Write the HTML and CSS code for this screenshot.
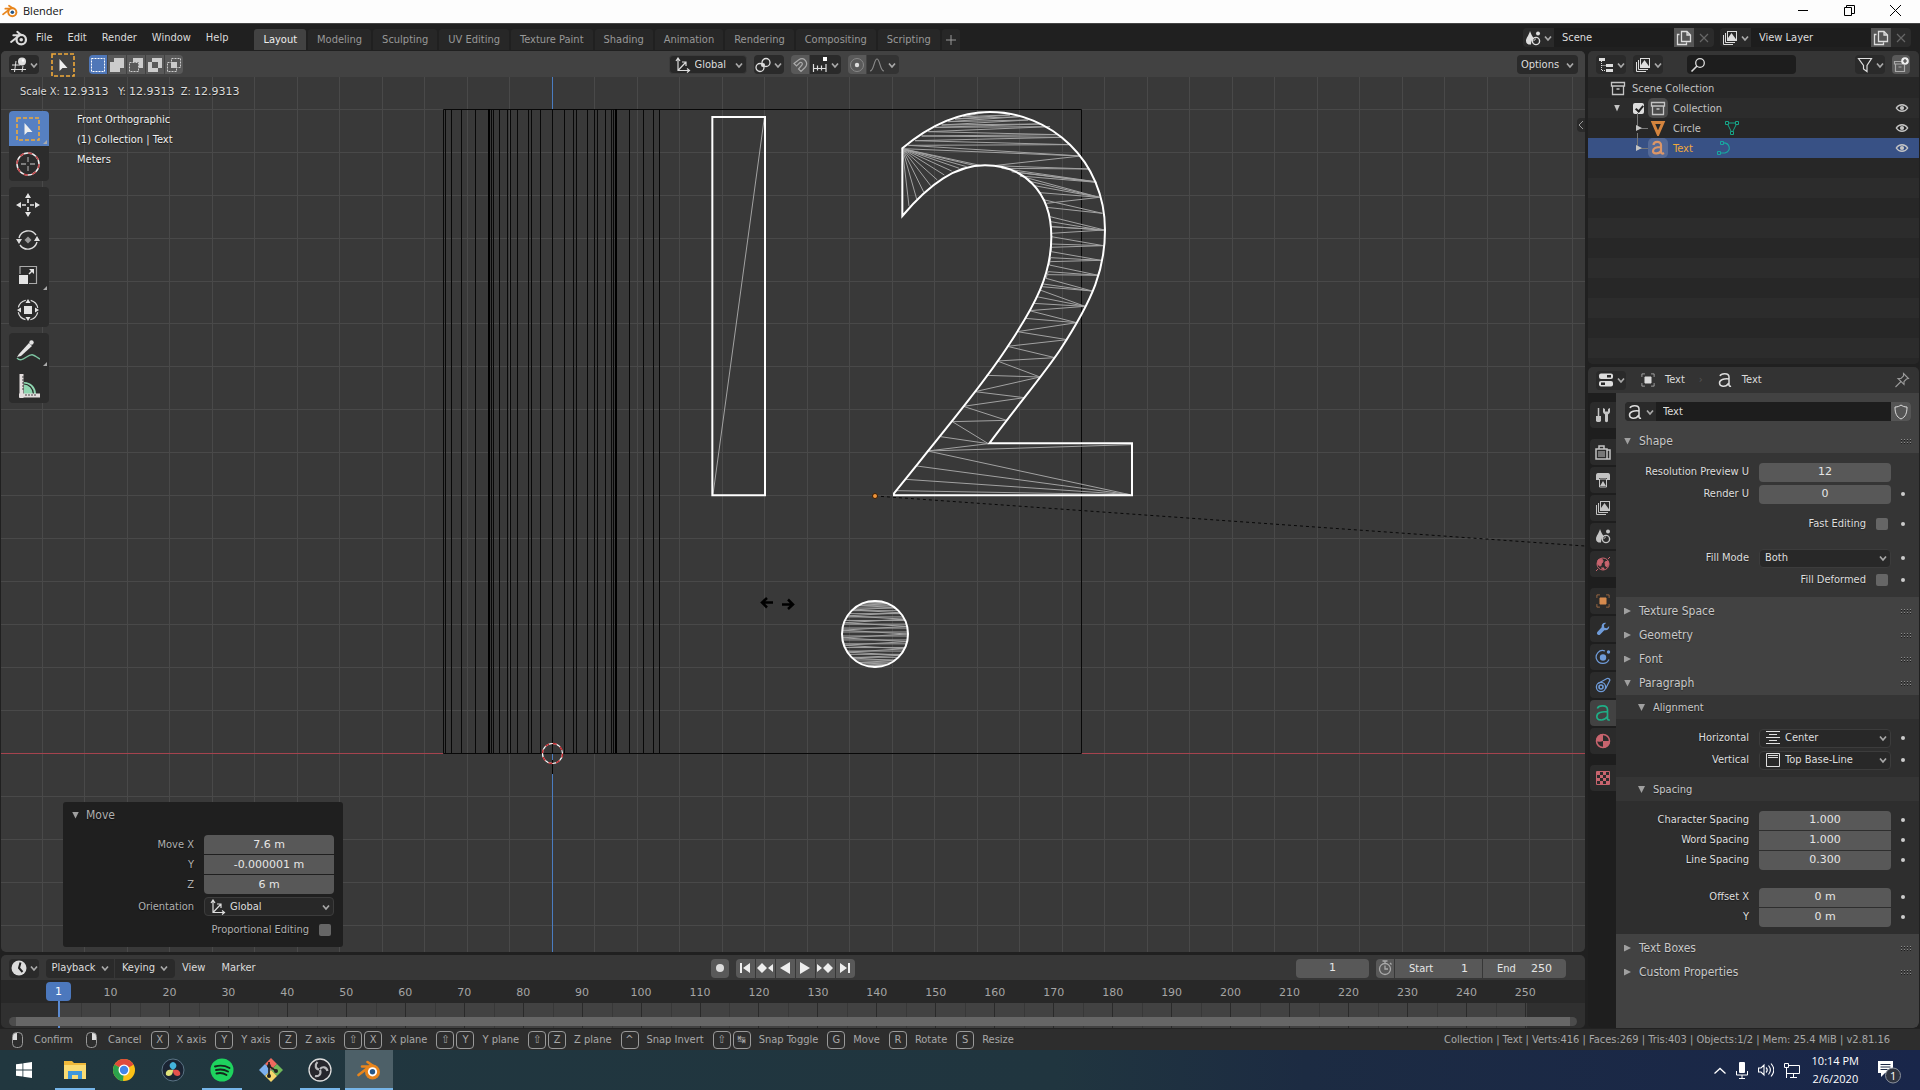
FILE: index.html
```html
<!DOCTYPE html>
<html lang="en">
<head>
<meta charset="utf-8">
<title>Blender</title>
<link rel="stylesheet" href="styles.css">
</head>
<body>
<svg class="defs" aria-hidden="true">
  <symbol id="chev" viewBox="0 0 8 8"><path d="M1 2.500 4 6l3-3.500" fill="none" stroke="currentColor" stroke-width="1.700"/></symbol>
  <symbol id="logo" viewBox="0 0 16 16"><path d="M1 11.500 8.500 5.500H3M6.500 2.500l3.500 3" fill="none" stroke="currentColor" stroke-width="1.800" stroke-linecap="round"/><circle cx="10" cy="9.500" r="4.200" fill="none" stroke="currentColor" stroke-width="2"/><circle cx="10" cy="9.500" r="1.600" fill="currentColor"/></symbol>
  <symbol id="logo-color" viewBox="0 0 24 24"><path d="M1.500 17 12.500 8.500H5M10.500 4l8 5.500" fill="none" stroke="#e8851c" stroke-width="2.600" stroke-linecap="round"/><circle cx="15.500" cy="14" r="7.500" fill="#e8851c"/><circle cx="15.500" cy="13.800" r="4.600" fill="#fff"/><circle cx="15.500" cy="13.800" r="2.700" fill="#265787"/></symbol>
  <symbol id="view3d" viewBox="0 0 16 16"><path d="M5 4 3.500 15M12 9l-1 6M1 8h8M0 12.500h15" fill="none" stroke="currentColor"/><circle cx="11" cy="4.500" r="4" fill="currentColor"/><circle cx="12" cy="3.500" r="1.200" fill="#fff"/></symbol>
  <symbol id="select" viewBox="0 0 24 24"><rect x="1" y="1" width="22" height="22" fill="none" stroke="#f0a93a" stroke-width="1.600" stroke-dasharray="4 2"/><path d="M8.500 6v12l3-3h5z" fill="#eee"/></symbol>
  <symbol id="axes" viewBox="0 0 16 16"><path d="M3 2v11.500h11M1 4l2-3 2 3M12 11.500l2.500 2-2.500 2M3 13.500 11 5M7 5h4v4" fill="none" stroke="currentColor" stroke-width="1.200"/></symbol>
  <symbol id="pivot" viewBox="0 0 16 16"><circle cx="5" cy="10.500" r="4" fill="none" stroke="currentColor" stroke-width="1.300"/><circle cx="11" cy="5.500" r="4" fill="none" stroke="currentColor" stroke-width="1.300"/><circle cx="8" cy="8" r="2" fill="currentColor"/></symbol>
  <symbol id="magnet" viewBox="0 0 16 16"><path d="M2 6.500 6.500 3c6-4 10.500 3 6.500 7.500l-4 4-2.500-2.500 3.500-4c1-2-.5-3-2-2.500L4.500 9z" fill="none" stroke="currentColor" stroke-width="1.200"/></symbol>
  <symbol id="snapinc" viewBox="0 0 16 16"><path d="M1.500 7v8M14 7v8M5.500 8.500v5M9.500 8.500v5M1 11.500h13" fill="none" stroke="currentColor" stroke-width="1.200"/><path d="M11 0h4v4h-4z" fill="#fff"/></symbol>
  <symbol id="prop" viewBox="0 0 16 16"><circle cx="8" cy="8" r="6.500" fill="none" stroke="#888"/><circle cx="8" cy="8" r="2.200" fill="#ddd"/></symbol>
  <symbol id="curve" viewBox="0 0 16 16"><path d="M1 14c4 0 4-12 7-12s3 12 7 12" fill="none" stroke="currentColor" stroke-width="1.200"/></symbol>
  <symbol id="scene" viewBox="0 0 16 16"><path d="M5 1C4 5 1 8 1 11c0 3 3 4 5 3.500 0-3 1-5 3-6C7 6 6 4 5 1z" fill="currentColor"/><circle cx="11" cy="11" r="3.600" fill="none" stroke="currentColor" stroke-width="1.400"/><circle cx="13" cy="3.500" r="2" fill="currentColor"/><path d="M9 11c0-1 1-2 2-2" fill="none" stroke="currentColor"/></symbol>
  <symbol id="layers" viewBox="0 0 16 16"><path d="M1.500 5v9.500H11M3.500 3v9.500h9.500" fill="none" stroke="currentColor"/><rect x="5.500" y="1.500" width="9" height="9" fill="none" stroke="currentColor"/><path d="M6 10V8l3.500-5 5 7z" fill="currentColor"/></symbol>
  <symbol id="copy" viewBox="0 0 16 16"><path d="M5.500 1.500H11l3.500 3.500v6.500h-9zM11 1.500V5h3.500M3.500 4.500h-2v10h9v-2" fill="none" stroke="currentColor" stroke-width="1.300"/></symbol>
  <symbol id="cross" viewBox="0 0 16 16"><path d="m4 4 8 8M12 4l-8 8" stroke="currentColor" stroke-width="1.200"/></symbol>
  <symbol id="tree" viewBox="0 0 16 16"><path d="M1 1h6v3H1zM8 7h7v3H8zM8 12h7v3H8z" fill="currentColor"/><path d="M3.500 4v9.500H8M3.500 8.500H8" fill="none" stroke="currentColor" stroke-dasharray="1 1"/></symbol>
  <symbol id="search" viewBox="0 0 16 16"><circle cx="10" cy="6" r="4.300" fill="none" stroke="currentColor" stroke-width="1.300"/><path d="m7 9-5.500 5.500" stroke="currentColor" stroke-width="1.600"/></symbol>
  <symbol id="funnel" viewBox="0 0 16 16"><path d="M1.500 1.500h13L10 8.500v6L6.500 12V8.500z" fill="none" stroke="currentColor" stroke-width="1.200"/></symbol>
  <symbol id="box" viewBox="0 0 16 16"><path d="M1.500 2.500h13V6h-13zM2.500 6v8.500h11V6M6.500 9h3" fill="none" stroke="currentColor" stroke-width="1.300"/></symbol>
  <symbol id="boxnew" viewBox="0 0 16 16"><path d="M1.500 4.500h8V7h-8zM2.500 7v7.500h9V8M5.500 10h3" fill="none" stroke="currentColor" stroke-width="1.200"/><circle cx="12" cy="4" r="3.800" fill="#eee"/><path d="M12 2v4M10 4h4" stroke="#444" stroke-width="1.200"/></symbol>
  <symbol id="eye" viewBox="0 0 16 16"><path d="M1.500 8C4.500 3 11.500 3 14.500 8c-3 5-10 5-13 0z" fill="none" stroke="currentColor" stroke-width="1.600"/><circle cx="8" cy="8" r="2.400" fill="currentColor"/></symbol>
  <symbol id="meshobj" viewBox="0 0 16 16"><path d="M3 2.500h10L8 14z" fill="none" stroke="#d4843e" stroke-width="3"/></symbol>
  <symbol id="meshdata" viewBox="0 0 16 16"><path d="M3 3h10M3 3l5 10 5-10" fill="none" stroke="#17a589"/><path d="M1.500 1.500h3v3h-3zM11.500 1.500h3v3h-3zM6.500 11.500h3v3h-3z" fill="#262626" stroke="#17a589"/></symbol>
  <symbol id="curvedata" viewBox="0 0 16 16"><path d="M6 3c8-1 10 8 3 10H3" fill="none" stroke="#17a9a0" stroke-width="1.200"/><path d="M4.500 1.500h3v3h-3zM1.500 11.500h3v3h-3z" fill="#385185" stroke="#17a9a0"/></symbol>
  <symbol id="afont" viewBox="0 0 16 16"><path d="M3 4c1-3 9-3.500 9 1v8c0 1 1 1.500 2 1M12 7c-5-.5-9.500.5-9.500 4s6 5 9.500 0" fill="none" stroke="currentColor" stroke-width="1.500"/></symbol>
  <symbol id="afont-bold" viewBox="0 0 16 16"><path d="M3.500 5c0-4 7.500-4.500 7.500 0v7c0 1.500 1.500 2 3 1M11 7c-5 0-8 1.500-8 4s5 4 8 0" fill="none" stroke="#dc9667" stroke-width="2.200"/></symbol>
  <symbol id="props" viewBox="0 0 16 16"><rect x="1" y="1.500" width="14" height="5.500" rx="2" fill="currentColor"/><rect x="1" y="9" width="14" height="5.500" rx="2" fill="currentColor"/><path d="M9 3h4v2.500H9zM3 10.500h4V13H3z" fill="#282828"/></symbol>
  <symbol id="object" viewBox="0 0 16 16"><path d="M4.500 4.500h7v7h-7z" fill="currentColor" stroke="currentColor"/><path d="M1 4.500V1h3.500M11.500 1H15v3.500M15 11.500V15h-3.500M4.500 15H1v-3.500" fill="none" stroke="currentColor" opacity=".7"/></symbol>
  <symbol id="pin" viewBox="0 0 16 16"><path d="m9.500 1.500 5 5-2 .5-2.500 2.500v3l-6-6h3L9.500 4zM7 9.500 1.500 15" fill="none" stroke="currentColor" stroke-width="1.100"/></symbol>
  <symbol id="shield" viewBox="0 0 16 16"><path d="M2 3c3 0 4.500-1 6-2 1.500 1 3 2 6 2 0 6-1.500 10-6 12C3.500 13 2 9 2 3z" fill="none" stroke="currentColor"/></symbol>
  <symbol id="tool" viewBox="0 0 16 16"><path d="M3.500 1v8" stroke="currentColor" stroke-width="1.500"/><path d="M1 9h5v4.500c0 2-5 2-5 0z" fill="currentColor"/><path d="M8 1v3.500C8 6.500 9.500 7 10 7.500v6.500c0 1.500 3 1.500 3 0V7.500c.5-.5 2-1 2-3V1l-2 1v2.500h-3V2z" fill="currentColor"/></symbol>
  <symbol id="render" viewBox="0 0 16 16"><path d="M1 5h11v10H1zM12 6h3v9h-3M4 5V2h5v3" fill="none" stroke="currentColor" stroke-width="1.500"/><path d="M3 8h7M3 10h7M3 12h7" stroke="currentColor"/></symbol>
  <symbol id="output" viewBox="0 0 16 16"><path d="M1 4c0-3 1-3 3-3h8c2 0 3 0 3 3v4h-3V6H4v2H1z" fill="currentColor"/><path d="M4.500 7h7v8h-7z" fill="none" stroke="currentColor"/><path d="m5 14 3-5 3 5z" fill="currentColor"/></symbol>
  <symbol id="world" viewBox="0 0 16 16"><circle cx="8" cy="8" r="6" fill="none" stroke="currentColor"/><path d="M3 4c3-2 5-1 5 1S6 7 6 9s-2 1-3.500-1zM10 6l3-1 .5 3-1.500 3-1.500-1zM6.500 12l2.500 0-.5 1.500zM1 15l2-2M13 3l2-2" fill="currentColor" stroke="currentColor"/></symbol>
  <symbol id="wrench" viewBox="0 0 16 16"><path d="M15 4.500 12.500 7 9.500 6.500 9 3.500 11.500 1C8 .5 6 3 6.500 6L1.500 11.500c-1.500 2 1 4.500 3 3L9.500 9.500c3.500.5 6-2 5.500-5z" fill="currentColor"/></symbol>
  <symbol id="physics" viewBox="0 0 16 16"><path d="M10 2C4-.5 0 6 1.500 10c2 5.500 10 6 12.500.5" fill="none" stroke="currentColor" stroke-width="1.200"/><circle cx="8" cy="8.500" r="3.200" fill="currentColor"/><circle cx="13.500" cy="3" r="1.700" fill="currentColor"/></symbol>
  <symbol id="constraint" viewBox="0 0 16 16"><circle cx="6" cy="10" r="4.600" fill="none" stroke="currentColor" stroke-width="1.300"/><circle cx="6" cy="10" r="2" fill="none" stroke="currentColor" stroke-width="1.600"/><path d="M3 6.500 12 1.500c2-.5 3.500 1 2.500 2.500L10.500 12" fill="none" stroke="currentColor" stroke-width="1.200"/></symbol>
  <symbol id="material" viewBox="0 0 16 16"><circle cx="8" cy="8" r="6.500" fill="none" stroke="currentColor" stroke-width="1.500"/><path d="M8 1a7 7 0 0 0-7 7c2 1 5 1 7 0zM8 8h7a7 7 0 0 1-7 7z" fill="currentColor"/></symbol>
  <symbol id="texture" viewBox="0 0 16 16"><path d="M1.500 1.500h13v13h-13z" fill="none" stroke="currentColor"/><path d="M2 2h3v3H2zM8 2h3v3H8zM5 5h3v3H5zM11 5h3v3h-3zM2 8h3v3H2zM8 8h3v3H8zM5 11h3v3H5zM11 11h3v3h-3z" fill="currentColor"/></symbol>
  <symbol id="aligncenter" viewBox="0 0 16 16"><path d="M1 1.500h14M4 4.500h8M1 7.500h14M4 10.500h8M1 13.500h14" stroke="currentColor" stroke-width="1.200"/></symbol>
  <symbol id="aligntop" viewBox="0 0 16 16"><path d="M1.500 1.500h13v13h-13zM3 3.500h10M3 5.500h10" fill="none" stroke="currentColor"/></symbol>
  <symbol id="clock" viewBox="0 0 16 16"><circle cx="8" cy="8" r="7.500" fill="currentColor"/><path d="M9.500 2.500 8 8l3.500 4" fill="none" stroke="#222" stroke-width="2"/></symbol>
  <symbol id="stopwatch" viewBox="0 0 16 16"><circle cx="8" cy="9" r="5.500" fill="none" stroke="currentColor" stroke-width="1.300"/><path d="M8 5.500V9h3M5.500 1h5M8 1v2.500M13 3l1.500 1.500" fill="none" stroke="currentColor" stroke-width="1.300"/></symbol>
  <symbol id="grip" viewBox="0 0 11 5"><path d="M0 .5h11M0 3.500h11" stroke="#8a8a8a" stroke-dasharray="1 2"/><path d="M0 1.500h11M0 4.500h11" stroke="#1c1c1c" stroke-dasharray="1 2"/></symbol>
</svg>

<header class="titlebar">
  <svg class="i16"><use href="#logo-color"/></svg>
  <span>Blender</span>
  <div class="winbtns">
    <button aria-label="Minimize"><svg width="11" height="11"><path d="M0 5.500h10" stroke="#000"/></svg></button>
    <button aria-label="Restore"><svg width="11" height="11"><path d="M.5 2.500h7v8h-7zM2.500 2.500v-2h8v8h-3" fill="none" stroke="#000"/></svg></button>
    <button aria-label="Close"><svg width="11" height="11"><path d="m0 0 11 11M11 0 0 11" stroke="#000"/></svg></button>
  </div>
</header>

<div class="topbar">
  <nav class="menus">
    <button aria-label="Blender menu"><svg class="i18"><use href="#logo"/></svg></button>
    <button>File</button><button>Edit</button><button>Render</button><button>Window</button><button>Help</button>
  </nav>
  <nav class="tabs">
    <button class="on">Layout</button><button>Modeling</button><button>Sculpting</button><button>UV Editing</button><button>Texture Paint</button><button>Shading</button><button>Animation</button><button>Rendering</button><button>Compositing</button><button>Scripting</button><button aria-label="Add workspace"><svg width="10" height="10"><path d="M5 0v10M0 5h10" stroke="#999"/></svg></button>
  </nav>
  <div class="idblock">
    <button class="drop" aria-label="Browse scene"><svg class="i16"><use href="#scene"/></svg><svg class="chev"><use href="#chev"/></svg></button>
    <input aria-label="Scene name" value="Scene">
    <button class="raised" aria-label="New scene"><svg class="i16"><use href="#copy"/></svg></button>
    <button class="dim" aria-label="Delete scene"><svg class="i16"><use href="#cross"/></svg></button>
  </div>
  <div class="idblock">
    <button class="drop" aria-label="Browse view layer"><svg class="i16"><use href="#layers"/></svg><svg class="chev"><use href="#chev"/></svg></button>
    <input aria-label="View layer name" value="View Layer">
    <button class="raised" aria-label="New view layer"><svg class="i16"><use href="#copy"/></svg></button>
    <button class="dim" aria-label="Delete view layer"><svg class="i16"><use href="#cross"/></svg></button>
  </div>
</div>

<div class="workspace">
  <div class="column">
    <main class="area view">
      <div class="head viewhead">
        <div class="cluster">
          <button class="drop solo" aria-label="Editor type"><svg class="i16"><use href="#view3d"/></svg><svg class="chev"><use href="#chev"/></svg></button>
          <svg class="i24 activetool"><use href="#select"/></svg>
          <div class="joined modes">
            <button class="on" aria-label="Set"><svg class="i16" viewBox="0 0 16 16"><path d="M1.500 1.500h13v13h-13z" fill="none" stroke="#fff" stroke-dasharray="2 1"/></svg></button>
            <button aria-label="Extend"><svg class="i16" viewBox="0 0 16 16"><path d="M5 1h10v10h-4v4H1V5h4z" fill="#ccc"/></svg></button>
            <button aria-label="Subtract"><svg class="i16" viewBox="0 0 16 16"><path d="M5 1h10v10h-4V5H5z" fill="#ccc"/><path d="M1.500 5.500h9v9h-9z" fill="none" stroke="#ccc" stroke-dasharray="2 1"/></svg></button>
            <button aria-label="Difference"><svg class="i16" viewBox="0 0 16 16"><path d="M5 1h10v10h-4v4H1V5h4zm0 4v6h6V5z" fill="#ccc" fill-rule="evenodd"/></svg></button>
            <button aria-label="Intersect"><svg class="i16" viewBox="0 0 16 16"><path d="M5 5h6v6H5z" fill="#ccc"/><path d="M5.500 1.500h9v9h-9zM1.500 5.500h9v9h-9z" fill="none" stroke="#ccc" stroke-dasharray="2 1"/></svg></button>
          </div>
        </div>
        <div class="cluster middle">
          <div class="select global"><svg class="i16"><use href="#axes"/></svg><select aria-label="Transform orientation"><option>Global</option></select><svg class="chev"><use href="#chev"/></svg></div>
          <button class="drop solo" aria-label="Pivot point"><svg class="i16"><use href="#pivot"/></svg><svg class="chev"><use href="#chev"/></svg></button>
          <div class="joined"><button aria-label="Snap"><svg class="i16"><use href="#magnet"/></svg></button><button class="drop" aria-label="Snapping"><svg class="i16"><use href="#snapinc"/></svg><svg class="chev"><use href="#chev"/></svg></button></div>
          <div class="joined"><button aria-label="Proportional editing"><svg class="i16"><use href="#prop"/></svg></button><button class="drop faded" aria-label="Falloff"><svg class="i16"><use href="#curve"/></svg><svg class="chev"><use href="#chev"/></svg></button></div>
        </div>
        <div class="cluster end"><button class="drop options">Options<svg class="chev"><use href="#chev"/></svg></button></div>
      </div>
      <div class="canvas">
        <svg class="scene" aria-label="3D viewport">
          <g transform="translate(-1 -77)">
            <path id="grid" class="grid"/>
            <path d="M0 753.500H443M1081 753.500H3000" stroke="#a5434e"/>
            <path d="M552.500 77V109M552.500 753V2000" stroke="#4a7cc0"/>
            <path id="cylinder" d="M443.500 109.500H1081.500V753.500H443.500z" fill="none" stroke="#080808"/>
            <path d="M489 109V753M616 109V753" stroke="#000" stroke-width="2"/>
            <path d="M875 496 1585 546 2300 596" fill="none" stroke="#080808" stroke-dasharray="3 3"/>
            <g transform="translate(700 100) scale(.33333)" class="mesh">
              <path class="tri" d="M193 53 39 1184M607 146 627 318M607 146 650 297M607 146 671 276M607 146 692 257M607 146 712 240M607 146 733 225M607 146 755 213M607 146 778 205M607 146 800 200M607 146 825 197M607 146 1143 168M607 146 840 196
              M860 36 790 50 930 45 765 57 958 50 745 65 985 60 725 75 1020 72 705 82 1050 80 685 95 1075 104 665 108 1085 112 645 122 1110 134 625 136 1143 168
              M1143 168 880 197 1168 207 905 205 1185 245 935 215 1190 247 960 228 1198 292 985 243 1003 257 1198 292 1020 278 1030 299 1207 340 1040 322 1050 350 1213 390 1053 380 1054 410 1210 437 1054 432 1054 455 1203 481 1052 473 1048 495 1195 526 1045 515 1038 535 1176 573 1030 552 1020 570 1155 619 1010 590 1000 610 1155 619 988 632 1130 668 975 655 M1130 668 952 695 1102 719 922 739 1065 773 892 783 1020 831 858 826M1020 831 825 875 973 893 790 919 920 961 757 965 865 1031 722 1010M865 1031 683 1053 1294 1034M683 1053 1290 1184M650 1098 1290 1184M617 1138 1290 1184M590 1172 1290 1184
              M1052 365 1213 392M1040 310 1198 292M1052 442 1210 437M1048 485 1203 481M1044 524 1195 526M1025 560 1176 573M1052 380 1213 390M1054 400 1213 390"/>
              <path class="outline" d="M37 51H195V1186H37zM607 145C690 75 780 36 870 36 1050 36 1215 180 1215 390 1215 505 1182 594 1080 750 1035 818 960 907 868 1030H1296V1186H582V1180C720 1008 855 846 930 729 1005 615 1054 525 1054 410 1054 270 967 196 855 196 768 196 690 250 607 348z"/>
            </g>
            <path id="disc" class="tri"/>
            <circle cx="875" cy="634" r="33" fill="none" stroke="#fff" stroke-width="2"/>
            <circle cx="875" cy="496" r="2.500" fill="#f0963c" stroke="#3a1c00"/>
            <path d="M552.500 737v9M552.500 760v14M532 753.500h10M563 753.500h10" stroke="#050505"/>
            <circle cx="552.500" cy="753.500" r="10" fill="none" stroke="#fff" stroke-width="1.200"/>
            <circle cx="552.500" cy="753.500" r="10" fill="none" stroke="#c4272c" stroke-width="1.400" stroke-dasharray="4 3.850"/>
            <path d="M773 602.500H763M767 598l-5 4.500 5 5M782 604.500h10M788 599.500l5 5-5 4.500" fill="none" stroke="#000" stroke-width="2.500"/>
          </g>
        </svg>
        <p class="status">Scale X: <b>12.9313</b>&nbsp;&nbsp; Y: <b>12.9313</b>&nbsp; Z: <b>12.9313</b></p>
        <div class="overlay">
          <div class="toolbar">
            <div class="tools">
              <button class="on more" aria-label="Select box"><svg class="i24"><use href="#select"/></svg></button>
              <button aria-label="Cursor"><svg class="i24" viewBox="0 0 24 24"><circle cx="12" cy="12" r="11" fill="none" stroke="#eee" stroke-width="1.500"/><circle cx="12" cy="12" r="11" fill="none" stroke="#c0484c" stroke-width="1.600" stroke-dasharray="4.300 4.300"/><path d="M12 5v5M12 14v5M5 12h5M14 12h5" stroke="#999" stroke-width="1.300"/></svg></button>
            </div>
            <div class="tools">
              <button aria-label="Move"><svg class="i24" viewBox="0 0 24 24"><path d="M12 6v4M12 14v4M6 12h4M14 12h4" stroke="#e4e4e4" stroke-width="1.700"/><path d="m12 0 3 5H9zM12 24l3-5H9zM0 12l5-3v6zM24 12l-5-3v6z" fill="#e4e4e4"/></svg></button>
              <button aria-label="Rotate"><svg class="i24" viewBox="0 0 24 24"><path d="M3 10a9.500 9.500 0 0 1 17-3M21 14a9.500 9.500 0 0 1-17 3" fill="none" stroke="#ddd" stroke-width="1.400"/><path d="M0 11h6l-3 5zM18 13h6l-3-5z" fill="#ddd"/><path d="m12 8.500 3.500 3.500-3.500 3.500L8.500 12z" fill="#999"/></svg></button>
              <button class="more" aria-label="Scale"><svg class="i24" viewBox="0 0 24 24"><path d="M4 11V3.500h16.500v17H13" fill="none" stroke="#aaa" stroke-width="1.200"/><path d="M3 12h9v9H3zM18 6v5l-5-5z" fill="#e4e4e4"/><path d="m13 11 3-3" stroke="#e4e4e4" stroke-width="1.500"/></svg></button>
              <button aria-label="Transform"><svg class="i24" viewBox="0 0 24 24"><circle cx="12" cy="12" r="10" fill="none" stroke="#ddd" stroke-width="1.200" stroke-dasharray="10.700 5" stroke-dashoffset="-2.500"/><path d="M8 8h8v8H8zM12 1l2.500 4h-5zM12 23l2.500-4h-5zM1 12l4-2.500v5zM23 12l-4-2.500v5z" fill="#e4e4e4"/></svg></button>
            </div>
            <div class="tools">
              <button class="more" aria-label="Annotate"><svg class="i24" viewBox="0 0 24 24"><path d="M1 19c5 6 11-5 16-3 3 1 3 2 7 4" fill="none" stroke="#7cc3a0" stroke-width="1.400"/><path d="m3 15 10-11 3 3L5 17l-4 1z" fill="#e4e4e4"/><circle cx="15.500" cy="3.500" r="2.200" fill="#e4e4e4"/></svg></button>
              <button aria-label="Measure"><svg class="i24" viewBox="0 0 24 24"><path d="M8 20V8c7 0 12 5 12 12z" fill="#8fd6b0"/><path d="M8 10c5 0 9 4 9.500 10" fill="none" stroke="#2c2c2c" stroke-width="1.200"/><path d="M5.500 0v24M3 21.500h21" stroke="#e4dede" stroke-width="4"/><path d="M6 3h2M6 6h2M6 9h2M6 12h2M6 15h2M10 20v2M13 20v2M16 20v2M19 20v2" stroke="#444"/></svg></button>
            </div>
          </div>
          <p class="info">Front Orthographic<br>(1) Collection | Text<br>Meters</p>
        </div>
        <button class="flap right" aria-label="Show sidebar"><svg width="6" height="10"><path d="M5 1 1 5l4 4" fill="none" stroke="#999"/></svg></button>
        <section class="redo">
          <h2><span class="tri-open"></span>Move</h2>
          <div class="grp">
            <label for="mx">Move X</label><input id="mx" value="7.6 m">
            <label for="my">Y</label><input id="my" value="-0.000001 m">
            <label for="mz">Z</label><input id="mz" value="6 m">
          </div>
          <div class="grp">
            <label for="mo">Orientation</label><div class="select"><svg class="i16"><use href="#axes"/></svg><select id="mo"><option>Global</option></select><svg class="chev"><use href="#chev"/></svg></div>
          </div>
          <div class="check"><label for="mp">Proportional Editing</label><input type="checkbox" id="mp"></div>
        </section>
      </div>
    </main>

    <section class="area timeline">
      <div class="head tlhead">
        <div class="cluster">
          <button class="drop solo" aria-label="Editor type"><svg class="i16"><use href="#clock"/></svg><svg class="chev"><use href="#chev"/></svg></button>
          <div class="joined tlmenus"><button class="drop">Playback<svg class="chev"><use href="#chev"/></svg></button><button class="drop">Keying<svg class="chev"><use href="#chev"/></svg></button></div>
          <button class="plain">View</button><button class="plain">Marker</button>
        </div>
        <div class="cluster play">
          <div class="joined"><button aria-label="Auto keying"><svg class="i16" viewBox="0 0 16 16"><circle cx="8" cy="8" r="4" fill="#ddd"/></svg></button></div>
          <div class="joined transport">
            <button aria-label="First frame"><svg class="i16" viewBox="0 0 16 16"><path d="M3 3h2v10H3zM13 3v10L6 8z" fill="#eee"/></svg></button>
            <button aria-label="Previous keyframe"><svg class="i16" viewBox="0 0 16 16"><path d="m5 3 5 5-5 5-5-5zM16 4v8l-5-4z" fill="#eee"/></svg></button>
            <button aria-label="Play reversed"><svg class="i16" viewBox="0 0 16 16"><path d="M13 2v12L3 8z" fill="#eee"/></svg></button>
            <button aria-label="Play"><svg class="i16" viewBox="0 0 16 16"><path d="M3 2v12l10-6z" fill="#eee"/></svg></button>
            <button aria-label="Next keyframe"><svg class="i16" viewBox="0 0 16 16"><path d="m11 3 5 5-5 5-5-5zM0 4v8l5-4z" fill="#eee"/></svg></button>
            <button aria-label="Last frame"><svg class="i16" viewBox="0 0 16 16"><path d="M11 3h2v10h-2zM3 3v10l7-5z" fill="#eee"/></svg></button>
          </div>
        </div>
        <div class="cluster end">
          <input class="num frame" aria-label="Current frame" value="1">
          <div class="joined range">
            <button aria-label="Use preview range"><svg class="i16"><use href="#stopwatch"/></svg></button>
            <label>Start<input value="1"></label>
            <label>End<input value="250"></label>
          </div>
        </div>
      </div>
      <div class="ruler">
        <ol id="frames"></ol>
        <span class="playhead">1</span>
        <div class="scroll"></div>
      </div>
    </section>
  </div>

  <div class="column side">
    <section class="area outliner">
      <div class="head outhead">
        <button class="drop solo" aria-label="Editor type"><svg class="i16"><use href="#tree"/></svg><svg class="chev"><use href="#chev"/></svg></button>
        <button class="drop solo" aria-label="Display mode"><svg class="i16"><use href="#layers"/></svg><svg class="chev"><use href="#chev"/></svg></button>
        <div class="search"><svg class="i16"><use href="#search"/></svg><input aria-label="Search"></div>
        <button class="drop solo" aria-label="Filter"><svg class="i16"><use href="#funnel"/></svg><svg class="chev"><use href="#chev"/></svg></button>
        <div class="joined"><button aria-label="New collection"><svg class="i16"><use href="#boxnew"/></svg></button></div>
      </div>
      <ul class="rows">
        <li class="root"><svg class="i16"><use href="#box"/></svg><span class="name">Scene Collection</span></li>
        <li class="l1"><span class="tri-open"></span><input type="checkbox" checked aria-label="Enable collection"><svg class="i16 halo"><use href="#box"/></svg><span class="name">Collection</span><svg class="i14 eye"><use href="#eye"/></svg></li>
        <li class="l2"><span class="tri-shut"></span><svg class="i16 halo clear"><use href="#meshobj"/></svg><span class="name">Circle</span><svg class="i16 data"><use href="#meshdata"/></svg><svg class="i14 eye"><use href="#eye"/></svg></li>
        <li class="l2 sel"><span class="tri-shut"></span><svg class="i16 halo"><use href="#afont-bold"/></svg><span class="name">Text</span><svg class="i16 data"><use href="#curvedata"/></svg><svg class="i14 eye"><use href="#eye"/></svg></li>
      </ul>
    </section>

    <section class="area properties">
      <div class="head prophead">
        <button class="drop solo" aria-label="Editor type"><svg class="i16"><use href="#props"/></svg><svg class="chev"><use href="#chev"/></svg></button>
        <svg class="i14 crumb"><use href="#object"/></svg><span>Text</span><span class="sep">›</span><svg class="i16"><use href="#afont"/></svg><span>Text</span>
        <svg class="i16 pin"><use href="#pin"/></svg>
      </div>
      <div class="propmain">
        <nav class="ptabs">
          <div><button aria-label="Tool"><svg class="i16"><use href="#tool"/></svg></button></div>
          <div>
            <button aria-label="Render"><svg class="i16"><use href="#render"/></svg></button>
            <button aria-label="Output"><svg class="i16"><use href="#output"/></svg></button>
            <button aria-label="View layer"><svg class="i16"><use href="#layers"/></svg></button>
            <button aria-label="Scene"><svg class="i16"><use href="#scene"/></svg></button>
            <button class="red" aria-label="World"><svg class="i16"><use href="#world"/></svg></button>
          </div>
          <div>
            <button class="orange" aria-label="Object"><svg class="i14"><use href="#object"/></svg></button>
            <button class="blue" aria-label="Modifiers"><svg class="i14"><use href="#wrench"/></svg></button>
            <button class="blue" aria-label="Physics"><svg class="i16"><use href="#physics"/></svg></button>
            <button class="blue" aria-label="Constraints"><svg class="i16"><use href="#constraint"/></svg></button>
            <button class="green on" aria-label="Text data"><svg class="i18"><use href="#afont"/></svg></button>
            <button class="red" aria-label="Material"><svg class="i16"><use href="#material"/></svg></button>
          </div>
          <div><button class="red" aria-label="Texture"><svg class="i16"><use href="#texture"/></svg></button></div>
        </nav>
        <div class="panels">
          <div class="idblock">
            <button class="drop" aria-label="Browse text"><svg class="i16"><use href="#afont"/></svg><svg class="chev"><use href="#chev"/></svg></button>
            <input aria-label="Text name" value="Text">
            <button class="raised" aria-label="Fake user"><svg class="i16"><use href="#shield"/></svg></button>
          </div>
          <section>
            <h2><span class="tri-open"></span>Shape<svg class="grip"><use href="#grip"/></svg></h2>
            <div class="body mid">
              <div class="rowf"><label for="ru">Resolution Preview U</label><input class="num" id="ru" value="12"></div>
              <div class="rowf dot"><label for="rn">Render U</label><input class="num" id="rn" value="0"></div>
              <div class="rowf dot chk gap-s"><label for="fe">Fast Editing</label><input type="checkbox" id="fe"></div>
              <div class="rowf dot gap-m"><label for="fm">Fill Mode</label><div class="select"><select id="fm"><option>Both</option></select><svg class="chev"><use href="#chev"/></svg></div></div>
              <div class="rowf dot chk"><label for="fd">Fill Deformed</label><input type="checkbox" id="fd"></div>
            </div>
          </section>
          <section><h2><span class="tri-shut"></span>Texture Space<svg class="grip"><use href="#grip"/></svg></h2></section>
          <section><h2><span class="tri-shut"></span>Geometry<svg class="grip"><use href="#grip"/></svg></h2></section>
          <section><h2><span class="tri-shut"></span>Font<svg class="grip"><use href="#grip"/></svg></h2></section>
          <section>
            <h2><span class="tri-open"></span>Paragraph<svg class="grip"><use href="#grip"/></svg></h2>
            <h3><span class="tri-open"></span>Alignment</h3>
            <div class="body deep">
              <div class="rowf dot"><label for="ha">Horizontal</label><div class="select"><svg class="i16"><use href="#aligncenter"/></svg><select id="ha"><option>Center</option></select><svg class="chev"><use href="#chev"/></svg></div></div>
              <div class="rowf dot"><label for="va">Vertical</label><div class="select"><svg class="i16"><use href="#aligntop"/></svg><select id="va"><option>Top Base-Line</option></select><svg class="chev"><use href="#chev"/></svg></div></div>
            </div>
            <h3><span class="tri-open"></span>Spacing</h3>
            <div class="body deep">
              <div class="stack">
                <div class="rowf dot"><label for="cs">Character Spacing</label><input class="num" id="cs" value="1.000"></div>
                <div class="rowf dot"><label for="ws">Word Spacing</label><input class="num" id="ws" value="1.000"></div>
                <div class="rowf dot"><label for="ls">Line Spacing</label><input class="num" id="ls" value="0.300"></div>
              </div>
              <div class="stack gap-m">
                <div class="rowf dot"><label for="ox">Offset X</label><input class="num" id="ox" value="0 m"></div>
                <div class="rowf dot"><label for="oy">Y</label><input class="num" id="oy" value="0 m"></div>
              </div>
            </div>
          </section>
          <section><h2><span class="tri-shut"></span>Text Boxes<svg class="grip"><use href="#grip"/></svg></h2></section>
          <section><h2><span class="tri-shut"></span>Custom Properties<svg class="grip"><use href="#grip"/></svg></h2></section>
        </div>
      </div>
    </section>
  </div>
</div>

<footer class="statusbar">
  <ul>
    <li><svg class="mouse" viewBox="0 0 18 18"><rect x="4.500" y="1.500" width="10" height="15" rx="4" fill="none" stroke="#999"/><path d="M5 9V5q0-3 4-3v7z" fill="#ddd"/></svg><span>Confirm</span></li>
    <li><svg class="mouse" viewBox="0 0 18 18"><rect x="4.500" y="1.500" width="10" height="15" rx="4" fill="none" stroke="#999"/><path d="M14 9V5q0-3-4-3v7z" fill="#ddd"/></svg><span>Cancel</span></li>
    <li><kbd>X</kbd><span>X axis</span></li>
    <li><kbd>Y</kbd><span>Y axis</span></li>
    <li><kbd>Z</kbd><span>Z axis</span></li>
    <li><kbd>⇧</kbd><kbd>X</kbd><span>X plane</span></li>
    <li><kbd>⇧</kbd><kbd>Y</kbd><span>Y plane</span></li>
    <li><kbd>⇧</kbd><kbd>Z</kbd><span>Z plane</span></li>
    <li><kbd>^</kbd><span>Snap Invert</span></li>
    <li><kbd>⇧</kbd><kbd>↹</kbd><span>Snap Toggle</span></li>
    <li><kbd>G</kbd><span>Move</span></li>
    <li><kbd>R</kbd><span>Rotate</span></li>
    <li><kbd>S</kbd><span>Resize</span></li>
  </ul>
  <p>Collection | Text | Verts:416 | Faces:269 | Tris:403 | Objects:1/2 | Mem: 25.4 MiB | v2.81.16</p>
</footer>

<div class="taskbar">
  <button class="start" aria-label="Start"><svg class="i16" viewBox="0 0 16 16"><path d="M0 2.300 6.500 1.400v6.200H0zM7.300 1.300 16 0v7.600H7.300zM0 8.400h6.500v6.200L0 13.700zM7.300 8.400H16V16l-8.700-1.300z" fill="#fff"/></svg></button>
  <button class="run" aria-label="File Explorer"><svg class="i24" viewBox="0 0 24 24"><path d="M1 3h8l2 2h12v16H1z" fill="#f0b93a"/><path d="M1 7h22v14H1z" fill="#fbdc73"/><path d="M5 21v-8h14v8h-4v-4H9v4z" fill="#3f97dc"/></svg></button>
  <button aria-label="Chrome"><svg class="i24" viewBox="0 0 24 24"><circle cx="12" cy="12" r="11" fill="#fbc116"/><path d="M12 12 2.500 6.500A11 11 0 0 1 21.500 6.500z" fill="#df4a3c"/><path d="M12 12 2.500 6.500A11 11 0 0 0 11 23z" fill="#2ba24c"/><path d="M12 6.500h9.500L12 12z" fill="#df4a3c"/><circle cx="12" cy="12" r="5.500" fill="#fff"/><circle cx="12" cy="12" r="4.200" fill="#4285e8"/></svg></button>
  <button aria-label="DaVinci Resolve"><svg class="i24" viewBox="0 0 24 24"><circle cx="12" cy="12" r="11" fill="#1a2433" stroke="#5a7384"/><path d="M12 12c-5-3-4-7 0-8 4 1 5 5 0 8z" fill="#43b3dc"/><path d="M12 12c0 6-4 7-7 5-1-4 2-6 7-5z" fill="#dfe37a"/><path d="M12 12c0 6 4 7 7 5 1-4-2-6-7-5z" fill="#e4504c"/></svg></button>
  <button class="run" aria-label="Spotify"><svg class="i24" viewBox="0 0 24 24"><circle cx="12" cy="12" r="11.500" fill="#1ed35e"/><path d="M5 8.500c5-1.500 10-1 14.500 1.500M6 12c4-1 8.500-.5 12 1.500M6.500 15.500c3.500-1 7-.5 10 1.500" fill="none" stroke="#14261b" stroke-width="1.900" stroke-linecap="round"/></svg></button>
  <button aria-label="Git"><svg class="i24" viewBox="0 0 24 24"><path d="m12 0 6 6-6 6-6-6z" fill="#ee6a5e"/><path d="m6 6 6 6-6 6-6-6z" fill="#7db0ee"/><path d="m18 6 6 6-6 6-6-6z" fill="#6fb95a"/><path d="m12 12 6 6-6 6-6-6z" fill="#f5d66c"/><path d="M10 4v15M10 8l7 5" stroke="#222" stroke-width="1.700"/><circle cx="10" cy="18" r="2" fill="#222"/><circle cx="17" cy="13" r="2" fill="#222"/><circle cx="10" cy="8" r="2" fill="#222"/></svg></button>
  <button class="run" aria-label="OBS Studio"><svg class="i24" viewBox="0 0 24 24"><circle cx="12" cy="12" r="11" fill="#26262c" stroke="#ddd" stroke-width="1.300"/><path d="M9.500 4c-3 3-2 7 1.500 7.500M19.500 13c-1-4-5-5-7.500-2M7 18c4 1 6.500-2 5-6" fill="none" stroke="#b9b9bc" stroke-width="2.200"/></svg></button>
  <button class="run active" aria-label="Blender"><svg class="i24" viewBox="0 0 24 24"><use href="#logo-color"/></svg></button>
  <div class="tray">
    <button aria-label="Hidden icons"><svg width="12" height="7"><path d="m.5 6.500 5.500-5 5.500 5" fill="none" stroke="#fff" stroke-width="1.300"/></svg></button>
    <button aria-label="Microphone"><svg width="12" height="17"><rect x="3" y="0" width="6" height="11" rx="1" fill="#fff"/><path d="M.5 9v4h11V9M6 13v3M3 16.500h6" fill="none" stroke="#fff"/></svg></button>
    <button aria-label="Volume"><svg width="16" height="16"><path d="M.5 6v4H3l3 3V3L3 6zM8 5.500c1.500 1.500 1.500 3.500 0 5M10.500 3.500c2.500 3 2.500 6 0 9M13 1.500c3.500 4 3.500 9 0 13" fill="none" stroke="#fff" stroke-width="1.100"/></svg></button>
    <button aria-label="Network"><svg width="16" height="16"><path d="M5 3.500h10.500v8H3M9.500 12v3M6 15.500h7M.5 1.500h4v4h-4zM2.500 6v10" fill="none" stroke="#fff"/></svg></button>
    <time>10:14 PM<br>2/6/2020</time>
    <button class="notes" aria-label="Notifications"><svg width="24" height="24"><path d="M1 1h15v12H8l-4 4v-4H1z" fill="#fff"/><path d="M3.500 4.500h10M3.500 7h10M3.500 9.500h7" stroke="#1b2844"/><circle cx="16" cy="15.500" r="7.500" fill="#2f3440" stroke="#8b919c"/></svg><span>1</span></button>
  </div>
</div>
<script src="script.js"></script>
</body>
</html>
```

FILE: styles.css
```css
* { box-sizing: border-box; }
:root {
  --ui: "DejaVu Sans Condensed", "DejaVu Sans", sans-serif;
  --num: "DejaVu Sans", sans-serif;
}
body {
  margin: 0;
  min-height: 100vh;
  display: flex;
  flex-direction: column;
  background: #202020;
  color: #dcdcdc;
  font: 11px/20px var(--ui);
  overflow: hidden;
}
button, input, select { font: inherit; color: inherit; border: 0; padding: 0; margin: 0; background: none; }
button { display: flex; align-items: center; justify-content: center; }
h2, h3, p, ul, ol { margin: 0; padding: 0; font-weight: normal; list-style: none; }
input { min-width: 0; outline: 0; }
.defs { display: none; }
.i14 { width: 14px; height: 14px; flex: none; }
.i16 { width: 16px; height: 16px; flex: none; }
.i18 { width: 18px; height: 18px; flex: none; }
.i24 { width: 24px; height: 24px; flex: none; }
.chev { width: 8px; height: 8px; flex: none; color: #a8a8a8; pointer-events: none; }

/* Windows title bar */
.titlebar { display: flex; align-items: center; height: 24px; padding: 0 2px 2px 2px; gap: 5px; background: #fdfdfd; color: #111; border-bottom: 1px solid #444; font: 11px/20px "Open Sans", sans-serif; }
.winbtns { margin-left: auto; display: flex; }
.winbtns button { width: 46px; height: 21px; }

/* Blender top bar */
.topbar { display: flex; align-items: center; height: 27px; padding-right: 9px; gap: 6px; }
.menus { display: flex; padding: 0 20px 0 10px; gap: 15px; }
.menus button:first-child { margin-right: -7px; }
.tabs { display: flex; gap: 2px; margin-right: auto; align-self: flex-end; padding-bottom: 1px; }
.tabs button { height: 21px; padding: 0 9px; background: #272727; color: #989898; border-radius: 3px 3px 0 0; }
.tabs button:last-child { padding: 0 4px; }
.tabs .on { background: #424242; color: #eee; }

.idblock { display: flex; height: 19px; border-radius: 4px; overflow: hidden; background: #2b2b2b; color: #ddd; }
.idblock .drop { width: 31px; border-radius: 4px 0 0 4px; }
.idblock input { width: 120px; padding-left: 8px; background: #1d1d1d; }
.idblock .raised { width: 20px; background: #555; }
.idblock .dim { width: 20px; color: #666; }

.drop { height: 19px; gap: 3px; background: #2a2a2a; color: #ddd; border-radius: 4px; }
.solo { width: 30px; }
.joined { display: flex; gap: 1px; border-radius: 4px; overflow: hidden; }
.joined button { width: 18px; height: 19px; background: #595959; color: #aaa; border-radius: 0; }
.joined .drop { width: 31px; background: #2a2a2a; color: #ddd; }
.joined .faded { width: 32px; background: #333; color: #888; }
.select { display: flex; align-items: center; height: 19px; padding: 0 5px; gap: 4px; border: 1px solid #3c3c3c; border-radius: 4px; background: #282828; }
.select select { flex: 1; min-width: 0; appearance: none; outline: 0; }
.select .chev { margin-right: -2px; }

.workspace { flex: 1; display: grid; grid-template-columns: minmax(0, 1fr) 331px; gap: 3px; padding: 0 1px; }
.column { display: flex; flex-direction: column; gap: 3px; min-width: 0; }
.area { border-radius: 5px; overflow: hidden; }
.head { display: flex; align-items: center; height: 26px; padding: 1px 8px 0; background: #424242; }
.cluster { display: flex; align-items: center; gap: 7px; }
.end { justify-content: flex-end; }

/* 3D viewport */
.view { flex: 1; display: flex; flex-direction: column; background: #393939; }
.viewhead { display: grid; grid-template-columns: 1fr auto 1fr; padding-right: 7px; }
.activetool { margin: 0 7px 0 5px; }
.modes .on { background: #4f77b8; }
.middle { margin-right: 20px; }
.global { width: 78px; }
.options { width: 61px; gap: 7px; }
.canvas { position: relative; flex: 1; display: flex; flex-direction: column; align-items: flex-start; text-shadow: 0 1px 1px #0008; }
.scene { position: absolute; inset: 0; width: 100%; height: 100%; }
.grid { stroke: #494949; fill: none; }
.tri { fill: none; stroke: #a2a2a2; vector-effect: non-scaling-stroke; }
.outline { fill: none; stroke: #fff; stroke-width: 2; vector-effect: non-scaling-stroke; }
.status, .overlay, .redo { position: relative; }
.status { height: 34px; padding-left: 19px; line-height: 29px; }
.status b { font-weight: normal; font-family: var(--num); }
.overlay { display: flex; gap: 28px; padding-left: 8px; }
.toolbar { display: grid; gap: 6px; }
.tools { border-radius: 4px; overflow: hidden; background: #2c2c2c; }
.tools button { position: relative; width: 40px; height: 35px; padding-right: 2px; }
.tools .on { background: #5680c2; }
.tools .more::after { content: ""; position: absolute; right: 2px; bottom: 2px; border: solid transparent; border-width: 2px; border-right-color: #aaa; border-bottom-color: #aaa; }
.info { color: #f0f0f0; margin-top: -1px; }
.flap { position: absolute; right: 0; top: 41px; width: 8px; height: 14px; background: #2a2a2a; border-radius: 4px 0 0 4px; }
.redo { width: 280px; height: 145px; margin: auto 0 5px 62px; padding: 0 9px; background: #1f1f1f; border-radius: 3px; color: #b0b0b0; }
.redo h2 { display: flex; align-items: center; gap: 7px; height: 33px; padding-bottom: 7px; font-size: 12px; }
.grp { display: grid; grid-template-columns: 1fr 130px; column-gap: 10px; row-gap: 1px; margin-bottom: 3px; text-align: right; line-height: 19px; }
.grp input { height: 19px; text-align: center; font-family: var(--num); background: #585858; color: #e6e6e6; }
.grp input:first-of-type { border-radius: 4px 4px 0 0; }
.grp input:last-of-type { border-radius: 0 0 4px 4px; }
.grp .select { color: #ddd; }
.check { display: flex; justify-content: flex-end; align-items: center; gap: 10px; padding: 1px 3px 0 0; }
input[type="checkbox"] { appearance: none; width: 12px; height: 12px; border-radius: 2px; background: #666; flex: none; }

/* Timeline */
.tlhead { height: 25px; background: #373737; display: grid; grid-template-columns: 1fr auto 1fr; padding-right: 19px; }
.tlmenus .drop { width: 68px; gap: 5px; }
.tlmenus .drop + .drop { width: 60px; }
.plain { margin-right: 9px; }
.play { margin-right: 10px; }
.transport button { width: 19px; }
.num { height: 19px; text-align: center; font-family: var(--num); background: #585858; color: #e6e6e6; border-radius: 4px; }
.frame { width: 73px; }
.range label { display: flex; width: 87px; padding: 0 14px; background: #585858; line-height: 19px; color: #e6e6e6; }
.range label + label { width: 83px; }
.range label input { flex: 1; width: 20px; text-align: right; font-family: var(--num); }
.ruler { position: relative; height: 48px; background: linear-gradient(#282828 23px, #303030 23px); color: #a5a5a5; font-family: var(--num); }
.ruler::before { content: ""; position: absolute; inset: 23px 58px 0 57px; background: #424242; }
.ruler ol { position: relative; display: flex; padding: 0 30px 0 80px; }
.ruler li { flex: 1; height: 48px; text-align: center; line-height: 25px; background: linear-gradient(#2a2a2a, #2a2a2a) 50% 23px / 1px 100% no-repeat, linear-gradient(#383838, #383838) 0 23px / 1px 100% no-repeat; }
.playhead { position: absolute; left: 45px; top: 2px; width: 25px; height: 19px; border-radius: 4px; background: #4c78bd; color: #fff; text-align: center; }
.playhead::after { content: ""; position: absolute; left: 12px; top: 19px; width: 2px; height: 27px; background: #5b8ad0; }
.scroll { position: absolute; left: 8px; right: 8px; bottom: 2px; height: 9px; border-radius: 5px; background: #666; border: solid #4c4c4c; border-width: 0 7px; }

/* Outliner */
.outliner { height: 313px; background: #272727; }
.outhead { background: #353535; gap: 7px; }
.search { display: flex; align-items: center; width: 109px; height: 19px; margin: 0 52px 0 17px; padding-left: 3px; border-radius: 4px; background: #1d1d1d; }
.search input { width: 80px; }
.rows { height: 287px; padding-top: 1px; background: repeating-linear-gradient(#272727 0 20px, #2c2c2c 20px 40px) 0 1px; color: #c4c4c4; }
.rows li { display: flex; align-items: center; height: 20px; padding-right: 10px; position: relative; }
.rows .name { padding: 2px 0 0 1px; }
.rows .root { padding-left: 22px; gap: 5px; }
.rows .l1 { padding-left: 26px; }
.rows .l2 { padding-left: 46px; }
.rows .tri-open, .rows .tri-shut { background: #c4c4c4; }
.rows .tri-open { width: 6px; margin-right: 13px; }
.rows .tri-shut { width: 6px; height: 6px; margin: 0 2px; z-index: 1; }
.halo { width: 20px; height: 20px; padding: 2px; margin: 0 4px; border-radius: 5px; background: #ffffff26; }
.clear { background: none; }
.data { margin-left: 23px; }
.eye { margin-left: auto; }
.l1 input { width: 11px; height: 11px; background: #ddd; position: relative; }
.l1 input::after { content: ""; position: absolute; left: 4px; top: 1px; width: 3px; height: 6px; border: solid #222; border-width: 0 2px 2px 0; transform: rotate(40deg); }
.l2::before { content: ""; position: absolute; left: 49px; top: -5px; height: 15px; width: 10px; border: solid #777; border-width: 0 0 1px 1px; }
.sel { background: #385185; }
.sel .name { color: #f0a93a; }
.tri-open, .tri-shut { flex: none; width: 7px; height: 7px; background: #a0a0a0; }
.tri-open { clip-path: polygon(0 0, 100% 0, 50% 100%); }
.tri-shut { clip-path: polygon(0 0, 100% 50%, 0 100%); }

/* Properties */
.properties { flex: 1; display: flex; flex-direction: column; }
.prophead { background: #333; padding: 0 9px 0 8px; }
.prophead .crumb { margin: 0 10px 0 15px; }
.prophead .sep { width: 32px; text-align: center; color: #555; }
.prophead .sep + svg { margin-right: 9px; }
.pin { margin-left: auto; color: #999; }
.propmain { flex: 1; display: flex; }
.ptabs { display: flex; flex-direction: column; gap: 11px; width: 28px; padding: 9px 0 0 2px; background: #1e1e1e; color: #c4c4c4; }
.ptabs div { display: grid; gap: 2px; }
.ptabs button { width: 26px; height: 26px; background: #2b2b2b; border-radius: 4px 0 0 4px; }
.ptabs .on { background: #424242; }
.red { color: #c8646e; }
.orange { color: #d68a4e; }
.blue { color: #6f9bd8; }
.green { color: #1fae86; }
.panels { flex: 1; background: #424242; border-radius: 0 0 6px 0; }
.panels .idblock { margin: 9px 8px 8px 9px; }
.panels .idblock input { flex: 1; padding-left: 7px; }
.panels h2, .panels h3 { display: flex; align-items: center; height: 24px; padding: 0 7px 0 8px; gap: 8px; font-size: 12px; color: #c8c8c8; text-shadow: 0 1px 1px #0006; }
.panels h3 { padding: 1px 7px 0 22px; font-size: 11px; background: #353535; }
.grip { width: 11px; height: 5px; margin-left: auto; }
.body { display: grid; gap: 3px; padding: 9px 15px 8px 8px; color: #dedede; text-shadow: 0 1px 1px #0006; }
.mid { background: #353535; }
.deep { background: #2e2e2e; }
.body:last-child { margin-bottom: 2px; }
.rowf { display: grid; grid-template-columns: 1fr 132px 3px; align-items: center; gap: 10px; height: 19px; text-align: right; }
.dot::after { content: ""; width: 4px; height: 4px; border-radius: 2px; background: #ccc; }
.chk { grid-template-columns: 1fr 12px 6px; }
.chk::after { margin-left: 3px; }
.gap-s { margin-top: 8px; }
.gap-m { margin-top: 12px; }
.stack { display: grid; gap: 1px; }
.stack.gap-m { margin-top: 15px; }
.stack .num { border-radius: 0; }
.stack .rowf:first-child .num { border-radius: 4px 4px 0 0; }
.stack .rowf:last-child .num { border-radius: 0 0 4px 4px; }

/* Status bar */
.statusbar { display: flex; align-items: center; justify-content: space-between; height: 22px; padding: 0 30px 0 8px; background: #2d2d2d; border-top: 1px solid #222; color: #a8a8a8; }
.statusbar ul { display: flex; gap: 9px; }
.statusbar li { display: flex; align-items: center; gap: 2px; }
.statusbar li span { margin-left: 6px; }
.mouse { width: 18px; height: 18px; }
kbd { width: 18px; height: 18px; border: 1px solid #999; border-radius: 4px; font: 11px/16px var(--ui); text-align: center; }

/* Windows taskbar */
.taskbar { display: flex; gap: 1px; height: 40px; background: linear-gradient(90deg, #21373f, #20353f 55%, #1c2b42 68%, #19264a); color: #fff; }
.taskbar > button { width: 48px; border-bottom: 2px solid transparent; border-top: 2px solid transparent; position: relative; }
.taskbar .start { margin-right: 2px; }
.taskbar .run::after { content: ""; position: absolute; inset: auto 4px -2px; height: 2px; background: #76b5e8; }
.taskbar .active { background: #4d6068; }
.taskbar .active::after { left: 0; right: 0; }
.tray { display: flex; align-items: center; margin-left: auto; gap: 10px; padding-right: 19px; font: 11px/18px "Open Sans", sans-serif; text-align: center; }
.tray time { margin: 0 8px 0 2px; }
.notes { position: relative; padding-top: 3px; }
.notes span { position: absolute; left: 13px; top: 10px; font-size: 11px; }
```

FILE: script.js
```js
const range = (n, f) => Array.from({ length: n }, (_, i) => f(i));

// Floor grid, centred on the world origin
const origin = { x: 552, y: 753 };
const cols = range(80, i => Math.floor(origin.x + 0.3 + (i - 13) * 42.5));
const rows = range(40, i => Math.floor(origin.y + 0.3 - (16 - i) * 42.93));
document.getElementById('grid').setAttribute('d',
  cols.map(x => `M${x + 0.5} 0V2400`).join('') + rows.map(y => `M0 ${y + 0.5}H3600`).join(''));

// Edges of the cylinder seen side on
const edges = [445, 451, 461, 475, 491, 493, 499, 507, 510, 517, 528, 531, 540, 552, 564, 573,
  576, 587, 594, 597, 605, 611, 613, 629, 643, 653, 659];
const cylinder = document.getElementById('cylinder');
cylinder.setAttribute('d', cylinder.getAttribute('d') + edges.map(x => `M${x + 0.5} 109V753`).join(''));

// Triangulated disc
let side = 1;
const points = range(27, i => {
  const a = (i + 0.5) / 27 * Math.PI;
  side = -side;
  return `${875 + side * 33 * Math.sin(a)} ${634 - 33 * Math.cos(a)}`;
});
const rungs = range(26, i => {
  const a = (i + 0.5) / 26 * Math.PI;
  const w = 33 * Math.sin(a), y = 634 - 33 * Math.cos(a);
  return `M${875 - w} ${y}H${875 + w}`;
});
document.getElementById('disc').setAttribute('d', 'M' + points.join('L') + rungs.join(''));

// Frame numbers
document.getElementById('frames').innerHTML = range(25, i => `<li>${(i + 1) * 10}</li>`).join('');
```
